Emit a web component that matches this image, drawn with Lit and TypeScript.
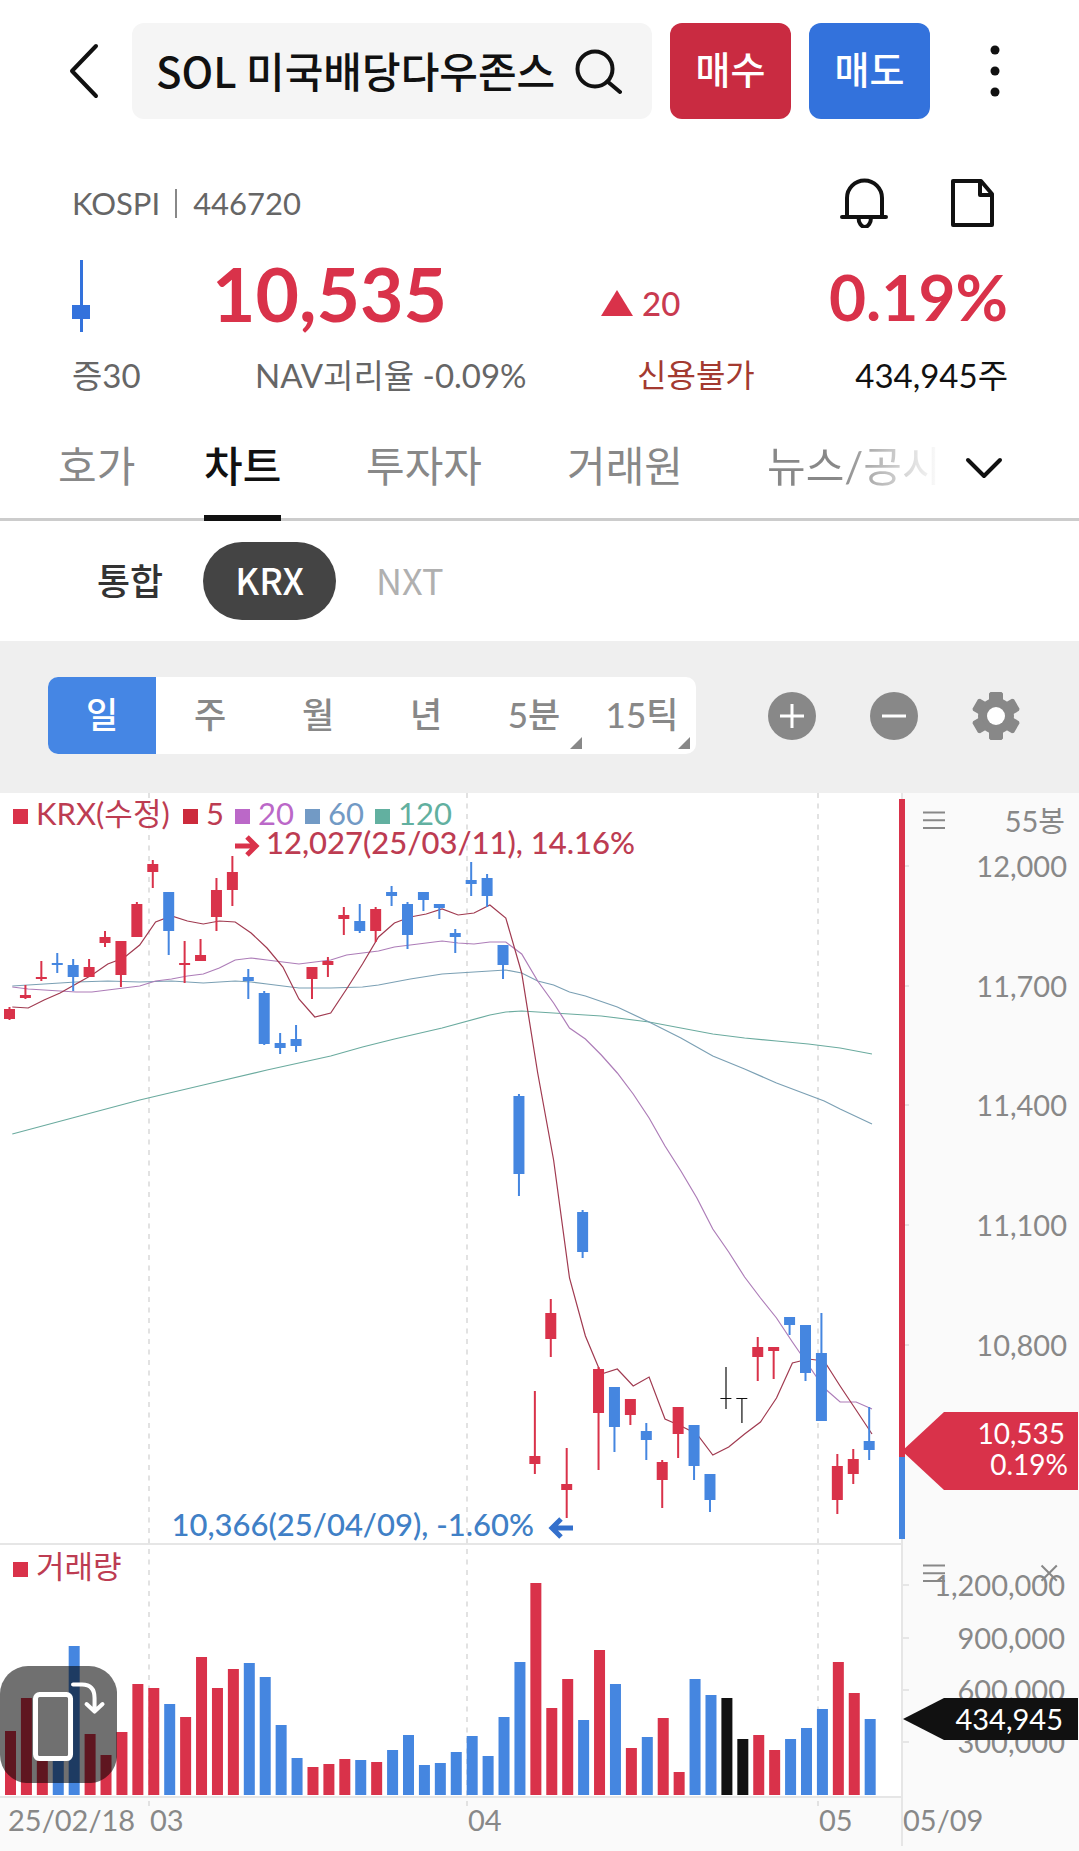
import { LitElement, html, svg, css } from "lit";
import { customElement, state } from "lit/decorators.js";
import { classMap } from "lit/directives/class-map.js";

type Tone = "up" | "down" | "flat";

/** tone, high, body top, body bottom, low, volume bar top (chart units) */
type Session = [Tone, number, number, number, number, number];

const SESSIONS: Session[] = [
  ["up", 1007, 1009, 1019, 1020, 1731],
  ["up", 985, 995, 998, 999, 1698],
  ["up", 961, 977, 979, 981, 1757],
  ["down", 953, 963, 965, 973, 1757],
  ["down", 959, 965, 977, 991, 1646],
  ["up", 959, 967, 977, 977, 1734],
  ["up", 931, 937, 943, 947, 1755],
  ["up", 941, 941, 975, 987, 1732],
  ["up", 902, 904, 937, 937, 1684],
  ["up", 860, 864, 872, 888, 1688],
  ["down", 892, 892, 931, 955, 1704],
  ["up", 941, 963, 965, 983, 1717],
  ["up", 939, 955, 961, 961, 1657],
  ["up", 878, 890, 917, 931, 1688],
  ["up", 856, 872, 890, 906, 1669],
  ["down", 969, 977, 981, 999, 1663],
  ["down", 991, 993, 1044, 1045, 1677],
  ["down", 1033, 1043, 1048, 1054, 1725],
  ["down", 1025, 1039, 1046, 1052, 1758],
  ["up", 967, 967, 979, 999, 1767],
  ["up", 957, 961, 965, 977, 1764],
  ["up", 907, 915, 919, 935, 1759],
  ["down", 904, 921, 931, 933, 1760],
  ["up", 907, 909, 931, 942, 1762],
  ["down", 886, 892, 896, 906, 1750],
  ["down", 902, 904, 935, 949, 1735],
  ["down", 892, 892, 900, 911, 1765],
  ["down", 904, 904, 908, 919, 1763],
  ["down", 929, 933, 937, 953, 1752],
  ["down", 862, 880, 884, 896, 1736],
  ["down", 874, 878, 896, 907, 1756],
  ["down", 945, 945, 965, 979, 1717],
  ["down", 1094, 1096, 1174, 1196, 1662],
  ["up", 1391, 1456, 1464, 1474, 1583],
  ["up", 1299, 1313, 1339, 1357, 1708],
  ["up", 1448, 1484, 1490, 1518, 1679],
  ["down", 1210, 1212, 1252, 1258, 1720],
  ["up", 1367, 1369, 1413, 1470, 1650],
  ["down", 1387, 1387, 1427, 1452, 1684],
  ["up", 1399, 1399, 1415, 1425, 1748],
  ["down", 1423, 1431, 1440, 1460, 1737],
  ["up", 1460, 1462, 1480, 1508, 1718],
  ["up", 1407, 1407, 1434, 1458, 1772],
  ["down", 1425, 1425, 1466, 1480, 1679],
  ["down", 1474, 1474, 1500, 1512, 1695],
  ["flat", 1367, 1398, 1399, 1409, 1698],
  ["flat", 1398, 1398, 1399, 1423, 1739],
  ["up", 1337, 1347, 1357, 1381, 1735],
  ["up", 1347, 1347, 1351, 1379, 1750],
  ["down", 1317, 1317, 1325, 1335, 1739],
  ["down", 1325, 1325, 1373, 1381, 1728],
  ["down", 1313, 1353, 1421, 1421, 1709],
  ["up", 1454, 1466, 1500, 1514, 1662],
  ["up", 1449, 1459, 1474, 1484, 1693],
  ["down", 1407, 1441, 1450, 1460, 1719],
];

/** [session index, y] pairs for each moving average */
const AVERAGES: { tone: string; points: [number, number][] }[] = [
  {
    tone: "ma120",
    points: [[0, 1134], [4, 1117], [8, 1100], [12, 1085], [16, 1070], [20, 1056], [22, 1047], [24, 1039], [27, 1028],
      [30, 1015], [31, 1012], [32, 1011], [35, 1014], [37, 1016], [40, 1022], [42, 1028], [44, 1034], [46, 1038],
      [48, 1041], [50, 1044], [52, 1048], [54, 1054]],
  },
  {
    tone: "ma60",
    points: [[0, 986], [2, 984], [4, 982], [6, 981], [8, 982], [10, 981], [12, 983], [14, 981], [15, 982], [16, 984],
      [18, 988], [20, 988], [22, 987], [23, 985], [25, 979], [27, 974], [29, 972], [31, 970], [32, 973], [33, 981],
      [34, 985], [35, 992], [36, 996], [38, 1007], [40, 1022], [42, 1038], [44, 1056], [46, 1069], [48, 1083],
      [50, 1095], [51, 1101], [52, 1109], [54, 1124]],
  },
  {
    tone: "ma20",
    points: [987, 989, 990, 991, 992, 992, 990, 988, 986, 981, 979, 976, 974, 968, 960, 958, 960, 962, 964, 962, 960,
      955, 953, 951, 947, 945, 943, 941, 943, 944, 942, 942, 954, 981, 1003, 1028, 1039, 1055, 1073, 1094, 1118, 1146,
      1171, 1198, 1229, 1252, 1277, 1298, 1318, 1342, 1365, 1388, 1402, 1402, 1409].map((y, i) => [i, y] as [number, number]),
  },
  {
    tone: "ma5",
    points: [1007, 1008, 1000, 993, 984, 975, 964, 958, 945, 922, 916, 921, 924, 921, 922, 933, 948, 967, 999, 1017,
      1013, 989, 964, 937, 923, 917, 914, 909, 915, 913, 905, 918, 973, 1073, 1160, 1278, 1336, 1374, 1369, 1386, 1377,
      1419, 1426, 1434, 1455, 1447, 1434, 1422, 1398, 1363, 1359, 1361, 1386, 1410, 1434].map((y, i) => [i, y] as [number, number]),
  },
];

const STEP = 15.92;
const PRICE_LABELS: [string, number][] = [
  ["12,000", 866], ["11,700", 986], ["11,400", 1105], ["11,100", 1225], ["10,800", 1345],
];
const VOLUME_LABELS: [string, number][] = [
  ["1,200,000", 1585], ["900,000", 1638], ["600,000", 1690], ["300,000", 1742],
];
const MONTHS: [string, number][] = [["03", 149], ["04", 467], ["05", 818]];
const LEGEND: [string, number, string][] = [
  ["KRX(수정)", 13, "krx"], ["5", 183, "ma5"], ["20", 235, "ma20"], ["60", 305, "ma60"], ["120", 375, "ma120"],
];

@customElement("price-chart")
export class PriceChart extends LitElement {
  static styles = css`
    :host { display: block; position: relative; }
    .canvas { display: block; width: 100%; height: auto; font-family: Lato, "Noto Sans CJK KR", sans-serif; }
    .axis-bg { fill: #fafafa; }
    .rule { fill: #e6e6e6; }
    .grid { stroke: #e2e2e2; stroke-width: 2; stroke-dasharray: 5 5.5; }
    .tick { fill: #e6e6e6; }
    .up { fill: #d9324a; }
    .down { fill: #4586e0; }
    .flat { fill: #111; }
    .average { fill: none; stroke-width: 1.2; }
    .average.ma5 { stroke: #a03a50; }
    .average.ma20 { stroke: #ad7db8; }
    .average.ma60 { stroke: #7ba0b4; }
    .average.ma120 { stroke: #6bab9f; }
    .legend { font-size: 31px; }
    .legend .krx { fill: #d9324a; }
    .legend .ma5 { fill: #cc2a3c; }
    .legend .ma20 { fill: #bb68c8; }
    .legend .ma60 { fill: #729ac5; }
    .legend .ma120 { fill: #62b0a0; }
    .legend text.krx, .legend text.ma5 { fill: #bd3c52; }
    .extreme { font-size: 31px; font-weight: 500; }
    .high { fill: #bd3c52; }
    .low { fill: #4080c6; }
    .arrow { fill: none; stroke-width: 5; }
    .arrow.high { stroke: #d9324a; }
    .arrow.low { stroke: #3470cc; }
    .label { font-size: 29px; fill: #888; }
    .end { text-anchor: end; }
    .tag-text { font-size: 29px; fill: #fff; text-anchor: end; }
    .tag-small { font-size: 28px; }
    .tool { position: absolute; padding: 0; border: 0; background: none; line-height: 0; cursor: pointer; }
    .tool svg { width: 100%; height: auto; fill: none; stroke: #888; stroke-width: 2; }
    .menu-price { left: 85.5%; top: 1.7%; width: 2.1%; }
    .menu-volume { left: 85.5%; top: 72.9%; width: 2.1%; }
    .close-volume { left: 96.4%; top: 72.9%; width: 1.7%; }
    .rotate { left: 0; top: 82.5%; width: 10.85%; }
    .rotate svg { stroke: none; }
    .rotate .plate { fill: rgba(0, 0, 0, 0.56); }
    .rotate .phone { fill: #707070; stroke: #fff; stroke-width: 5; }
    .rotate .turn { stroke: #fff; stroke-width: 4; stroke-linecap: round; stroke-linejoin: round; }
  `;

  private bodies() {
    return SESSIONS.map(([tone, high, top, bottom, low], i) => {
      const x = 9.5 + STEP * i;
      return svg`<g class=${tone}>
        <rect x=${x - (tone === "flat" ? 0.5 : 1)} y=${high} width=${tone === "flat" ? 1.2 : 2} height=${low - high}></rect>
        <rect x=${x - 5.5} y=${top} width="11" height=${bottom - top}></rect>
      </g>`;
    });
  }

  render() {
    return html`
      <svg class="canvas" viewBox="0 793 1079 1058" role="img" aria-label="일봉 차트와 거래량">
        <rect class="axis-bg" x="903" y="793" width="176" height="1058"></rect>
        <rect class="axis-bg" x="0" y="1798" width="903" height="53"></rect>
        <rect class="rule" x="901" y="793" width="2" height="1053"></rect>
        <rect class="rule" x="0" y="1543" width="901" height="2"></rect>
        <rect class="rule" x="0" y="1796" width="901" height="2"></rect>
        ${MONTHS.map(([name, x]) => svg`
          <line class="grid" x1=${x} x2=${x} y1="793" y2="1807"></line>
          <text class="label" x=${x + 1} y="1831">${name}</text>`)}
        ${AVERAGES.map((a) => svg`<polyline class="average ${a.tone}"
          points=${a.points.map(([i, y]) => `${(12.3 + STEP * i).toFixed(1)},${y}`).join(" ")}></polyline>`)}
        ${this.bodies()}
        ${SESSIONS.map(([tone, , , , , top], i) => svg`<rect class=${tone} x=${5 + STEP * i} y=${top} width="11" height=${1795 - top}></rect>`)}

        <rect class="up" x="899" y="799" width="6" height="658"></rect>
        <rect class="down" x="899" y="1457" width="6" height="82"></rect>

        <g class="legend">
          ${LEGEND.map(([name, x, tone]) => svg`
            <rect class=${tone} x=${x} y="809" width="15" height="15"></rect>
            <text class=${tone} x=${x + 23} y="825">${name}</text>`)}
          <rect class="krx" x="13" y="1562" width="15" height="15"></rect>
          <text class="krx" x="36" y="1578">거래량</text>
        </g>

        <path class="arrow high" d="M235 846H255M247 837L256 846L247 855"></path>
        <text class="extreme high" x="266" y="854">12,027(25/03/11), 14.16%</text>
        <path class="arrow low" d="M573 1528H553M561 1519L552 1528L561 1537"></path>
        <text class="extreme low end" x="534" y="1536">10,366(25/04/09), -1.60%</text>

        <text class="label end" x="1065" y="832">55봉</text>
        ${PRICE_LABELS.map(([name, y]) => svg`
          <rect class="tick" x="905" y=${y - 1} width="4" height="2"></rect>
          <text class="label end" x="1067" y=${y + 11}>${name}</text>`)}
        ${VOLUME_LABELS.map(([name, y]) => svg`
          <rect class="tick" x="903" y=${y - 1} width="6" height="2"></rect>
          <text class="label end" x="1065" y=${y + 11}>${name}</text>`)}
        <text class="label" x="8" y="1831">25/02/18</text>
        <text class="label" x="903" y="1831">05/09</text>

        <path class="up" d="M902 1451L944 1412H1078V1490H944Z"></path>
        <text class="tag-text tag-small" x="1065" y="1444">10,535</text>
        <text class="tag-text tag-small" x="1068" y="1475">0.19%</text>
        <path class="flat" d="M903 1719L944 1698H1078V1740H944Z"></path>
        <text class="tag-text" x="1063" y="1730">434,945</text>
      </svg>
      <button class="tool menu-price" aria-label="가격 차트 메뉴">
        <svg viewBox="0 0 22 18"><path d="M0 1.5H22M0 9H22M0 16.5H22"></path></svg>
      </button>
      <button class="tool menu-volume" aria-label="거래량 메뉴">
        <svg viewBox="0 0 22 18"><path d="M0 1.5H22M0 9H22M0 16.5H22"></path></svg>
      </button>
      <button class="tool close-volume" aria-label="거래량 닫기">
        <svg viewBox="0 0 18 18"><path d="M1.5 1.5L16.5 16.5M16.5 1.5L1.5 16.5"></path></svg>
      </button>
      <button class="tool rotate" aria-label="화면 회전">
        <svg viewBox="0 0 117 117">
          <rect class="plate" width="117" height="117" rx="28"></rect>
          <rect class="phone" x="35.5" y="28.5" width="35" height="64" rx="4"></rect>
          <path class="turn" d="M73 18.500H82Q94.500 18.500 94.500 32V45M86.500 38L94.500 45.500L102.500 38"></path>
        </svg>
      </button>
    `;
  }
}

@customElement("app-root")
export class AppRoot extends LitElement {
  @state() private tab = "차트";
  @state() private market = "KRX";
  @state() private period = "일";

  static styles = css`
    :host {
      display: block;
      background: #fff;
      color: #111;
      font-family: Lato, "Noto Sans CJK KR", sans-serif;
      font-size: 32px;
      line-height: 40px;
    }
    * { box-sizing: border-box; }
    button { margin: 0; padding: 0; border: 0; background: none; color: inherit; font: inherit; cursor: pointer; }
    svg { display: block; fill: none; }
    .line { stroke: #111; stroke-width: 4; stroke-linecap: round; stroke-linejoin: round; }

    .header { display: flex; align-items: center; padding: 23px 20px 0 0; }
    .back { display: flex; flex: none; width: 132px; height: 96px; padding-left: 67px; align-items: center; }
    .search {
      display: flex; flex: 1; min-width: 0; height: 96px; align-items: center;
      padding: 0 30px 0 24px; border-radius: 12px; background: #f5f5f5;
    }
    .search-input {
      flex: 1; min-width: 0; height: 64px; padding: 0 0 4px; border: 0; outline: 0; background: none;
      color: #111; font-family: "Noto Sans CJK KR", sans-serif; font-size: 42px; font-weight: 500;
    }
    .order {
      flex: none; width: 121px; height: 96px; margin-left: 18px; padding-bottom: 4px; border-radius: 12px;
      color: #fff; font-size: 38px; font-weight: 500;
    }
    .buy { background: #c92b41; }
    .sell { background: #3372dc; }
    .more { display: flex; flex: none; width: 129px; height: 96px; align-items: center; justify-content: center; }
    .dot { fill: #111; }

    .quote { padding: 60px 71px 0 72px; }
    .listing { display: flex; height: 48px; align-items: center; color: #666; font-size: 31px; }
    .code { margin-left: 15px; padding-left: 16px; border-left: 2px solid #888; line-height: 29px; }
    .alerts { display: flex; margin-left: auto; margin-right: 14px; gap: 62px; }
    .figures {
      display: grid; grid-template-columns: 140px 389px 1fr auto; align-items: center;
      height: 86px; margin-top: 23px; color: #d9324a;
    }
    .candle { margin-top: 6px; }
    .price { font-size: 75px; font-weight: 700; line-height: 86px; }
    .change { display: flex; align-items: center; gap: 9px; padding-top: 20px; font-size: 33px; font-weight: 500; color: #c93a50; }
    .triangle { fill: #d9324a; }
    .rate { padding-top: 8px; font-size: 64px; font-weight: 700; line-height: 74px; }
    .facts {
      display: grid; grid-template-columns: 183px 382px 1fr auto;
      margin-top: 19px; color: #666; font-size: 33px;
    }
    .warn { color: #a33a30; font-size: 32px; }
    .volume { color: #111; }
    .mini { fill: #3372dc; }

    .tabs {
      display: grid; grid-template-columns: 146px 162px 201px 200px 1fr 120px;
      height: 100px; margin-top: 26px; padding-left: 58px; border-bottom: 3px solid #ccc;
    }
    .tab {
      position: relative; justify-self: start; height: 97px; padding-bottom: 8px;
      color: #888; font-size: 42px; white-space: nowrap;
    }
    .tab.on { color: #111; font-weight: 500; }
    .tab.on::after { content: ""; position: absolute; left: 0; right: 0; bottom: -3px; height: 6px; background: #111; }
    .tab.faded { background: linear-gradient(90deg, #888 40%, #fff 100%); background-clip: text; -webkit-background-clip: text; color: transparent; }
    .expand { display: flex; align-items: center; padding-left: 5px; padding-bottom: 4px; }

    .markets { display: flex; padding: 21px 65px; }
    .market {
      height: 78px; padding: 0 32px 4px; border-radius: 39px;
      color: #b0b0b0; font-family: "Noto Sans CJK KR", sans-serif; font-size: 36px;
    }
    .market.all { color: #333; font-weight: 500; margin-right: 8px; }
    .market.on { margin-right: 8px; background: #444; color: #fff; font-weight: 500; }

    .toolbar {
      display: flex; align-items: center; justify-content: space-between;
      padding: 36px 59px 39px 48px; background: #efefef;
    }
    .periods { display: grid; grid-template-columns: repeat(6, 108px); border-radius: 10px; overflow: hidden; background: #fff; }
    .period { position: relative; height: 77px; padding-bottom: 4px; color: #888; font-size: 35px; font-weight: 500; }
    .period.on { background: #4586e4; color: #fff; }
    .period.menu::after {
      content: ""; position: absolute; right: 6px; bottom: 5px;
      border-left: 12px solid transparent; border-bottom: 12px solid #888;
    }
    .zoom { display: flex; gap: 54px; }
    .disc { fill: #888; }
    .hole { fill: #fff; }
    .glyph { stroke: #fff; stroke-width: 3; }
  `;

  render() {
    const tabs = ["호가", "차트", "투자자", "거래원", "뉴스/공시"];
    const periods = ["일", "주", "월", "년", "5분", "15틱"];
    return html`
      <header class="header">
        <button class="back" aria-label="뒤로">
          <svg class="line" width="32" height="56" viewBox="0 0 32 56"><path d="M29 3L5 28L29 53"></path></svg>
        </button>
        <div class="search">
          <input class="search-input" aria-label="종목 검색" .value=${"SOL 미국배당다우존스"} />
          <button aria-label="검색">
            <svg class="line" width="48" height="48" viewBox="0 0 48 48"><circle cx="21" cy="22" r="17.500"></circle><path d="M33.500 34.500L46 45"></path></svg>
          </button>
        </div>
        <button class="order buy">매수</button>
        <button class="order sell">매도</button>
        <button class="more" aria-label="더보기">
          <svg width="12" height="56" viewBox="0 0 12 56"><circle class="dot" cx="6" cy="7" r="4.500"></circle><circle class="dot" cx="6" cy="28" r="4.500"></circle><circle class="dot" cx="6" cy="49" r="4.500"></circle></svg>
        </button>
      </header>

      <section class="quote">
        <div class="listing">
          <span>KOSPI</span><span class="code">446720</span>
          <div class="alerts">
            <button aria-label="알림">
              <svg class="line" width="48" height="50" viewBox="0 0 48 50"><path d="M7 39V20A17.500 17.500 0 0 1 42 20V39M2 39H46M18.500 39.500A6 9 0 0 0 31 39.500"></path></svg>
            </button>
            <button aria-label="메모">
              <svg class="line" width="44" height="50" viewBox="0 0 44 50"><path d="M3 3H31L42 16V47H3ZM30 3V17H42"></path></svg>
            </button>
          </div>
        </div>
        <div class="figures">
          <svg class="candle" width="18" height="72" viewBox="0 0 18 72"><rect class="mini" x="8" width="3" height="72"></rect><rect class="mini" y="45" width="18" height="14"></rect></svg>
          <span class="price">10,535</span>
          <span class="change"><svg width="32" height="26" viewBox="0 0 32 26"><path class="triangle" d="M16 0L32 26H0Z"></path></svg>20</span>
          <span class="rate">0.19%</span>
        </div>
        <div class="facts">
          <span>증30</span>
          <span>NAV괴리율 -0.09%</span>
          <span class="warn">신용불가</span>
          <span class="volume">434,945주</span>
        </div>
      </section>

      <nav class="tabs">
        ${tabs.map((name, i) => html`<button
          class=${classMap({ tab: true, on: this.tab === name, faded: i === 4 && this.tab !== name })}
          @click=${() => (this.tab = name)}>${name}</button>`)}
        <button class="expand" aria-label="탭 펼치기">
          <svg class="line" width="40" height="24" viewBox="0 0 40 24"><path d="M4 4L20 20L36 4"></path></svg>
        </button>
      </nav>

      <div class="markets">
        ${["통합", "KRX", "NXT"].map((name, i) => html`<button
          class=${classMap({ market: true, all: i === 0, on: this.market === name })}
          @click=${() => (this.market = name)}>${name}</button>`)}
      </div>

      <div class="toolbar">
        <div class="periods">
          ${periods.map((name, i) => html`<button
            class=${classMap({ period: true, on: this.period === name, menu: i > 3 })}
            @click=${() => (this.period = name)}>${name}</button>`)}
        </div>
        <div class="zoom">
          <button aria-label="확대">
            <svg width="48" height="48" viewBox="0 0 48 48"><circle class="disc" cx="24" cy="24" r="24"></circle><path class="glyph" d="M12 24H36M24 12V36"></path></svg>
          </button>
          <button aria-label="축소">
            <svg width="48" height="48" viewBox="0 0 48 48"><circle class="disc" cx="24" cy="24" r="24"></circle><path class="glyph" d="M12 24H36"></path></svg>
          </button>
          <button aria-label="설정">
            <svg width="48" height="48" viewBox="0 0 48 48">
              <circle class="disc" cx="24" cy="24" r="18"></circle>
              ${[0, 60, 120].map((a) => svg`<path class="disc" transform="rotate(${a} 24 24)" d="M18.500 0H29.500L31 1.500V10H17V1.500ZM17 38H31V46.500L29.500 48H18.500L17 46.500Z"></path>`)}
              <circle class="hole" cx="24" cy="24" r="9"></circle>
            </svg>
          </button>
        </div>
      </div>

      <price-chart></price-chart>
    `;
  }
}
